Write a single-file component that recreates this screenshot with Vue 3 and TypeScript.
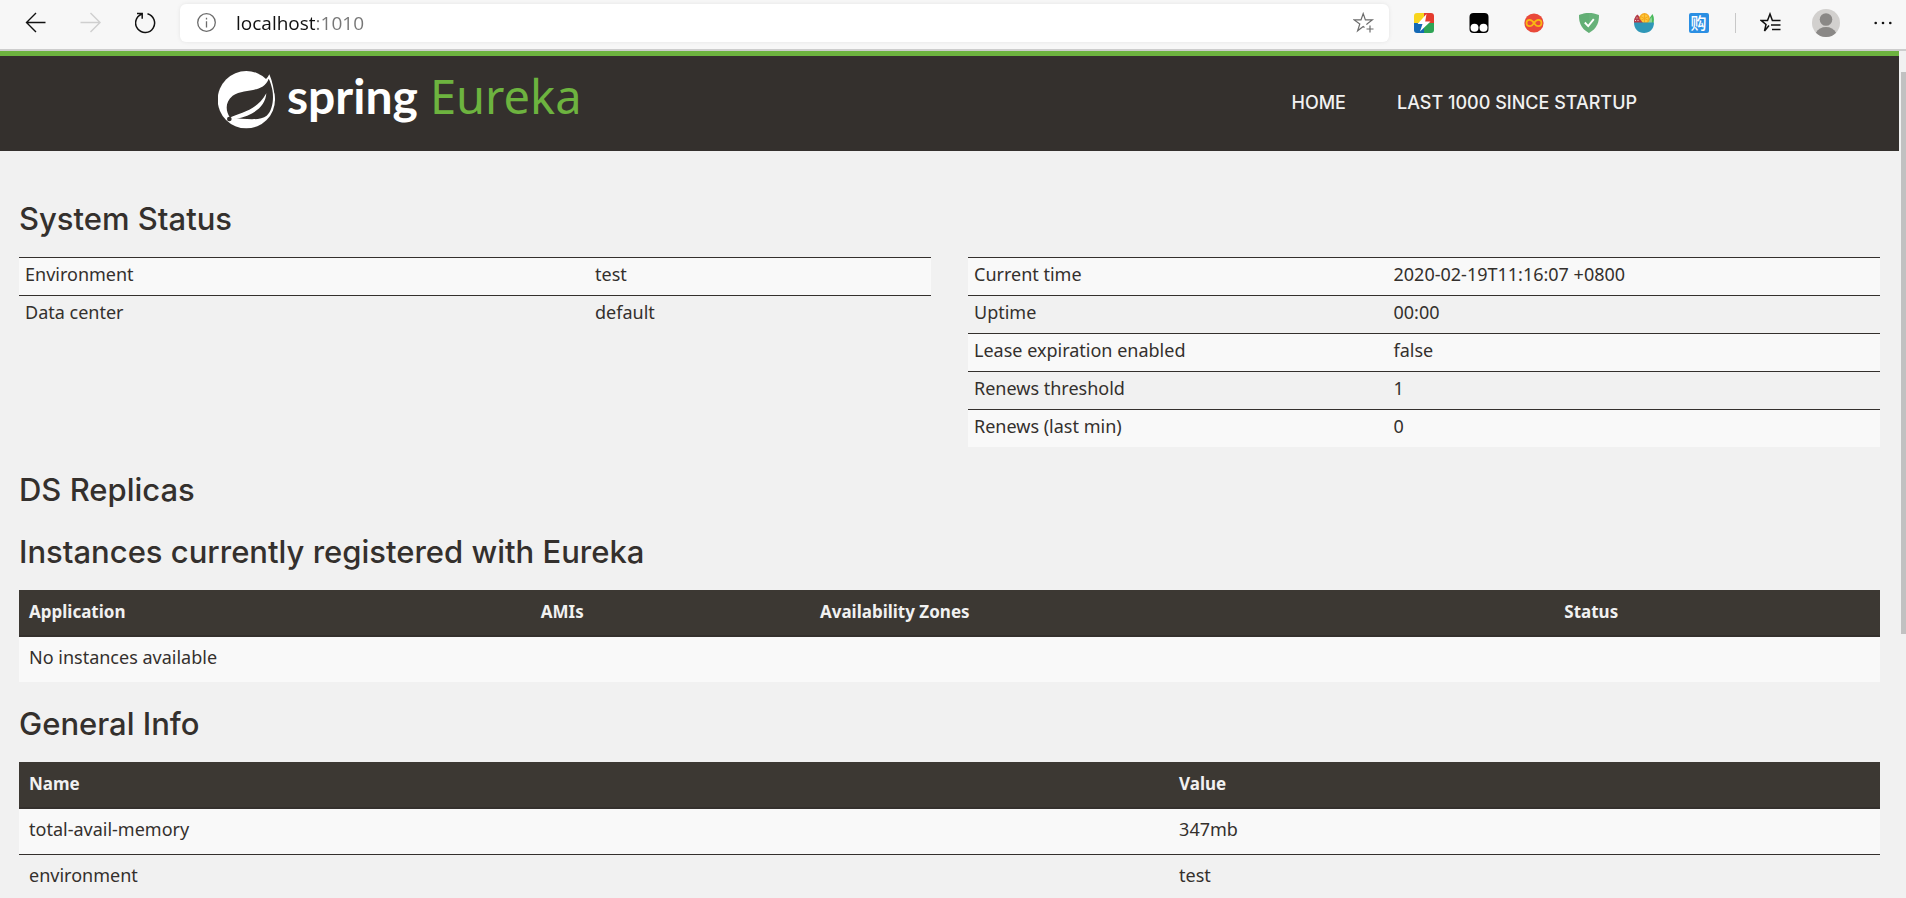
<script setup lang="ts">
import { ref } from 'vue'

interface Pair {
  name: string
  value: string
}

const address = ref('localhost:1010')

const environment: Pair[] = [
  { name: 'Environment', value: 'test' },
  { name: 'Data center', value: 'default' },
]

const runtime: Pair[] = [
  { name: 'Current time', value: '2020-02-19T11:16:07 +0800' },
  { name: 'Uptime', value: '00:00' },
  { name: 'Lease expiration enabled', value: 'false' },
  { name: 'Renews threshold', value: '1' },
  { name: 'Renews (last min)', value: '0' },
]

const generalInfo: Pair[] = [
  { name: 'total-avail-memory', value: '347mb' },
  { name: 'environment', value: 'test' },
]
</script>

<template>
  <div class="browser">
    <div class="toolbar">
      <button class="tool" type="button" aria-label="Back">
        <svg width="22" height="22" viewBox="0 0 22 22" fill="none" stroke="#111" stroke-width="1.4">
          <path d="M20.500 10.500H1.500M11 1 1.500 10.500 11 20" />
        </svg>
      </button>
      <button class="tool" type="button" aria-label="Forward" disabled>
        <svg width="22" height="22" viewBox="0 0 22 22" fill="none" stroke="#cfcfcf" stroke-width="1.4">
          <path d="M.5 10.500H20M10.500 1l9.500 9.500-9.500 9.500" />
        </svg>
      </button>
      <button class="tool" type="button" aria-label="Refresh">
        <svg width="22" height="22" viewBox="0 0 22 22" fill="none" stroke="#111" stroke-width="1.500">
          <path d="M12.500 1.800a9.500 9.500 0 1 1-6 .4M2 1.500h5.200v5.200" />
        </svg>
      </button>

      <div class="address">
        <button class="info" type="button" aria-label="Site information">
          <svg width="20" height="20" viewBox="0 0 20 20" fill="none" stroke="#6c6c6c" stroke-width="1.300">
            <circle cx="10.500" cy="9.500" r="8.800" />
            <path d="M10.500 8.300v6.200M10.500 4.700v1.700" />
          </svg>
        </button>
        <input v-model="address" class="url" type="text" aria-label="Address" spellcheck="false" />
        <button class="star" type="button" aria-label="Add to favorites">
          <svg width="22" height="22" viewBox="0 0 22 22" fill="none" stroke="#6c6c6c" stroke-width="1.200">
            <path d="M11.500 15.500 10.200 14.600 4.600 18.800 6.800 12 1.200 7.900H8L10.200 1.600l2.200 6.300h6.900L14.600 11.500M14.600 11.500l-1.200 1.100M17 13.500v7M13.500 17h7" />
          </svg>
        </button>
      </div>

      <div class="extensions">
        <button class="tool" type="button" aria-label="Colour bolt extension">
          <svg width="20" height="20" viewBox="0 0 20 20">
            <path fill="#f8d51c" d="M3 0h7v10H0V3a3 3 0 0 1 3-3z" />
            <path fill="#e43b2e" d="M10 0h7a3 3 0 0 1 3 3v7H10z" />
            <path fill="#1469b5" d="M0 10h10v10H3a3 3 0 0 1-3-3z" />
            <path fill="#2ea455" d="M10 10h10v7a3 3 0 0 1-3 3h-7z" />
            <path fill="#fff" d="M12.500 1 3.500 11h5L6 18.500 16.500 8.500h-5.300z" />
          </svg>
        </button>
        <button class="tool" type="button" aria-label="Script extension">
          <svg width="20" height="20" viewBox="0 0 20 20">
            <rect x=".5" width="19" height="20" rx="4" fill="#000" />
            <circle cx="5.500" cy="14.800" r="4" fill="#fff" />
            <circle cx="14.500" cy="14.800" r="4" fill="#fff" />
          </svg>
        </button>
        <button class="tool" type="button" aria-label="Infinity extension">
          <svg width="20" height="20" viewBox="0 0 20 20">
            <circle cx="10" cy="10" r="9.600" fill="#e9493a" />
            <path fill="none" stroke="#f9b812" stroke-width="1.700" d="M10 10C8.500 7.600 7.300 6.800 5.700 6.800a3.200 3.200 0 0 0 0 6.400c1.600 0 2.800-.8 4.300-3.200s2.700-3.200 4.300-3.200a3.200 3.200 0 0 1 0 6.400c-1.600 0-2.800-.8-4.300-3.200z" />
          </svg>
        </button>
        <button class="tool" type="button" aria-label="Shield extension">
          <svg width="20" height="20" viewBox="0 0 20 20">
            <path fill="#67b279" d="M10 0c3.200 0 6.800.6 10 2.100C20 9 18.500 15.500 10 20 1.500 15.500 0 9 0 2.100 3.200.6 6.800 0 10 0z" />
            <path fill="#5fa970" d="M10 0v20C1.500 15.500 0 9 0 2.100 3.200.6 6.800 0 10 0z" opacity=".4" />
            <path fill="none" stroke="#fff" stroke-width="1.900" d="m5.800 9.500 3.400 3.600 5.600-7" />
          </svg>
        </button>
        <button class="tool" type="button" aria-label="Fruit bowl extension">
          <svg width="20" height="20" viewBox="0 0 20 20">
            <path fill="#49b95c" d="M12 10 18.500 1c1.600 3 1.700 6 1 9z" />
            <path fill="#8fd694" d="M13 10 17.500 4c.6 2 .6 4 .3 6z" />
            <path fill="#b43d4a" d="M0 10C0 6 1 3.500 3.500 1.500L11 10z" />
            <circle cx="10.500" cy="5.400" r="5.300" fill="#f5a81c" />
            <circle cx="10.500" cy="5.400" r="3.900" fill="#fcc63c" />
            <path stroke="#f5a81c" d="M10.500 1v9M6.500 3.500l8 4M6.500 7.500l8-4" />
            <path fill="#b43d4a" d="M0 10C0 6 1 4 3 2.500L9 10z" />
            <path fill="#f4d5d8" d="M2.500 4.500h1v1h-1zM3.500 7h1v1h-1zM1 7h1v1H1z" />
            <path fill="#2f97b7" d="M0 9.500h20C20 16 15.500 20 10 20S0 16 0 9.500z" />
          </svg>
        </button>
        <button class="tool" type="button" aria-label="Shopping extension">
          <span class="shop">购</span>
        </button>
      </div>

      <span class="divider"></span>

      <button class="tool" type="button" aria-label="Favorites">
        <svg width="22" height="22" viewBox="0 0 22 22" fill="none" stroke="#111" stroke-width="1.500">
          <path d="M9 13.500 4.500 19 6 12.500 1.300 8.500H7.500L10 2l2.400 6.500H20.500M11 13h9.500M12 17.500h8.500" />
        </svg>
      </button>
      <button class="tool" type="button" aria-label="Profile">
        <svg width="28" height="28" viewBox="0 0 28 28">
          <circle cx="14" cy="14" r="14" fill="#d2d0ce" />
          <circle cx="14" cy="10.500" r="6.300" fill="#8a8886" />
          <path fill="#8a8886" d="M3.900 23.700C6 20 9.700 18 14 18s8 2 10.100 5.700A14 14 0 0 1 3.900 23.700z" />
        </svg>
      </button>
      <button class="tool more" type="button" aria-label="Settings and more">
        <svg width="18" height="4" viewBox="0 0 18 4" fill="#111">
          <circle cx="1.700" cy="2" r="1.300" />
          <circle cx="9" cy="2" r="1.300" />
          <circle cx="16.300" cy="2" r="1.300" />
        </svg>
      </button>
    </div>

    <div class="viewport">
      <div class="page">
        <header class="masthead">
          <div class="container">
            <a class="brand" href="#">
              <svg class="leaf" width="58" height="58" viewBox="24 26 174 174">
                <circle cx="109" cy="112" r="86" fill="#fff" />
                <path fill="#fff" d="M150 62Q170 54 178 36Q192 68 195 116z" />
                <path fill="#34302d" d="M176 49C160 94 104 76 68 100C44 120 47 146 60 166C110 170 150 176 170 160C188 144 192 108 187 82C184 68 181 58 176 49z" />
                <path fill="#fff" d="M58 166C92 152 142 144 169 93C166 132 134 158 78 170z" />
                <circle cx="58" cy="170" r="7" fill="#34302d" />
              </svg>
              <span class="wordmark">
                <span class="spring">spring</span>
                <span class="eureka">Eureka</span>
              </span>
            </a>
            <nav class="links">
              <a href="#">HOME</a>
              <a href="#lastn">LAST 1000 SINCE STARTUP</a>
            </nav>
          </div>
        </header>

        <main class="content">
          <h1>System Status</h1>
          <div class="status">
            <table class="condensed env">
              <tbody>
                <tr v-for="row in environment" :key="row.name">
                  <td>{{ row.name }}</td>
                  <td>{{ row.value }}</td>
                </tr>
              </tbody>
            </table>
            <table class="condensed runtime">
              <tbody>
                <tr v-for="row in runtime" :key="row.name">
                  <td>{{ row.name }}</td>
                  <td>{{ row.value }}</td>
                </tr>
              </tbody>
            </table>
          </div>

          <h1 class="replicas">DS Replicas</h1>

          <h1>Instances currently registered with Eureka</h1>
          <table class="listing instances">
            <thead>
              <tr>
                <th>Application</th>
                <th>AMIs</th>
                <th>Availability Zones</th>
                <th>Status</th>
              </tr>
            </thead>
            <tbody>
              <tr>
                <td colspan="4">No instances available</td>
              </tr>
            </tbody>
          </table>

          <h1>General Info</h1>
          <table class="listing general">
            <thead>
              <tr>
                <th>Name</th>
                <th>Value</th>
              </tr>
            </thead>
            <tbody>
              <tr v-for="row in generalInfo" :key="row.name">
                <td>{{ row.name }}</td>
                <td>{{ row.value }}</td>
              </tr>
            </tbody>
          </table>
        </main>
      </div>
      <div class="scrollbar"><span class="thumb"></span></div>
    </div>
  </div>
</template>

<style>
body {
  margin: 0;
  background: #f1f1f1;
}
</style>

<style scoped>
.browser {
  display: flex;
  flex-direction: column;
  height: 100vh;
  overflow: hidden;
  color: #34302d;
  font: 18px/27px "Noto Sans", "Open Sans", sans-serif;
}

.browser * {
  box-sizing: border-box;
}

button {
  padding: 0;
  border: 0;
  background: none;
}

.toolbar {
  display: flex;
  flex: none;
  align-items: flex-start;
  padding-left: 8px;
  background: #f7f7f7;
  border-bottom: 2px solid #cdcdcd;
}

.tool {
  display: flex;
  align-items: center;
  justify-content: center;
  width: 55px;
  height: 46px;
}

.address {
  display: flex;
  flex: 1;
  align-items: center;
  height: 38px;
  margin: 4px 7px 7px;
  padding: 0 14px 0 16px;
  background: #fff;
  border-radius: 6px;
  box-shadow: 0 0 4px rgba(0, 0, 0, 0.08);
}

.info,
.star {
  display: flex;
}

.url {
  flex: 1;
  min-width: 0;
  height: 30px;
  margin: 0 20px;
  padding: 0;
  border: 0;
  outline: 0;
  font: 19px "Open Sans", sans-serif;
  color: #111;
  background: linear-gradient(to right, #111 80px, #767676 80px);
  -webkit-background-clip: text;
  background-clip: text;
  -webkit-text-fill-color: transparent;
}

.extensions {
  display: flex;
}

.shop {
  width: 20px;
  height: 20px;
  border-radius: 2px;
  background: #2b8fe3;
  color: #fff;
  font: 500 16px/19px "Noto Sans CJK SC", sans-serif;
  text-align: center;
}

.divider {
  width: 1px;
  height: 20px;
  margin: 13px 7px 13px 9px;
  background: #c8c8c8;
}

.more {
  width: 53px;
  padding-left: 6px;
}

.viewport {
  display: flex;
  flex: 1;
  min-height: 0;
  overflow: hidden;
  background: #f1f1f1;
}

.page {
  flex: 1;
  min-width: 0;
}

.scrollbar {
  width: 7px;
  padding: 21px 0 0 2px;
  background: #f1f1f1;
}

.thumb {
  display: block;
  height: 68%;
  background: #c1c1c1;
}

.masthead {
  background: #34302d;
  border-top: 5px solid #6db33f;
}

.container {
  display: flex;
  align-items: center;
  justify-content: space-between;
  max-width: 1463px;
  height: 95px;
  margin: 0 auto;
  padding-bottom: 8px;
}

.brand {
  display: flex;
  align-items: center;
  text-decoration: none;
}

.leaf {
  margin-right: 11px;
}

.wordmark {
  display: flex;
  align-items: baseline;
  padding-bottom: 8px;
  line-height: 58px;
}

.spring {
  margin-right: 12px;
  color: #fff;
  font-family: Lato, sans-serif;
  font-size: 48px;
  font-weight: 700;
}

.eureka {
  color: #6db33f;
  font-size: 47px;
}

.links {
  display: flex;
  gap: 51px;
  padding: 6px 44px 0 0;
}

.links a {
  color: #f1f1f1;
  font-family: Inter, sans-serif;
  font-weight: 500;
  text-decoration: none;
}

.content {
  padding: 51px 19px 0;
}

h1 {
  margin: 25px 0 21px;
  font: 500 31px/34px Inter, sans-serif;
}

h1:first-child {
  margin-top: 0;
}

.replicas {
  margin: 26px 0 28px;
}

.status {
  display: grid;
  grid-template-columns: 1fr 1fr;
  align-items: start;
  gap: 37px;
}

table {
  width: 100%;
  border-collapse: separate;
  border-spacing: 0;
  table-layout: fixed;
}

th,
td {
  text-align: left;
}

tbody tr:nth-child(odd) td {
  background: #f9f9f9;
}

.condensed td {
  padding: 3px 6px 7px;
  border-top: 1px solid #34302d;
}

.env td:first-child {
  width: 62.5%;
}

.runtime td:first-child {
  width: 46%;
}

.listing th {
  padding: 8px 10px 10px;
  background: #3c3833;
  border-bottom: 2px solid #34302d;
  color: #f1f1f1;
  font-size: 17px;
}

.listing td {
  padding: 7px 10px 11px;
}

.listing tr + tr td {
  border-top: 1px solid #34302d;
}

.instances th:nth-child(1) {
  width: 27.5%;
}

.instances th:nth-child(2) {
  width: 15%;
}

.instances th:nth-child(3) {
  width: 40%;
}

.general th:first-child {
  width: 61.8%;
}
</style>
